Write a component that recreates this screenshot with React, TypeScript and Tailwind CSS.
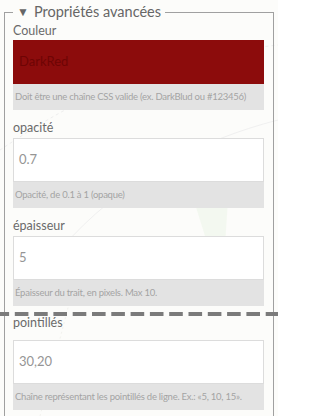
import React from 'react';

type Field = {
  label: string;
  value: string;
  help: string;
  swatch?: boolean;
  labelClass: string;
};

const fields: Field[] = [
  { label: 'Couleur', value: 'DarkRed', help: 'Doit être une chaîne CSS valide (ex. DarkBlud ou #123456)', swatch: true, labelClass: 'mt-0 mb-[2px]' },
  { label: 'opacité', value: '0.7', help: 'Opacité, de 0.1 à 1 (opaque)', labelClass: 'mt-[10px] mb-[3px]' },
  { label: 'épaisseur', value: '5', help: 'Épaisseur du trait, en pixels. Max 10.', labelClass: 'mt-[10px] mb-[3px]' },
  { label: 'pointillés', value: '30,20', help: 'Chaîne représentant les pointillés de ligne. Ex.: «5, 10, 15».', labelClass: 'mt-[9px] mb-[10px]' },
];

// faint map tiles showing through the panel
const MapBackdrop = () => (
  <svg className="absolute inset-0 pointer-events-none" width="278" height="416" viewBox="0 0 278 416">
    <path d="M178 150 L230 170 L222 290 Z" fill="#e9f3e4" opacity="0.45" />
    <path d="M0 150 C60 110 140 60 278 45" stroke="#eeeeee" strokeWidth="1" fill="none" strokeDasharray="3 3" />
    <path d="M60 250 C120 180 200 140 278 120" stroke="#f0f0f0" strokeWidth="1" fill="none" />
    <path d="M40 416 L70 300" stroke="#f2f2ee" strokeWidth="1" fill="none" strokeDasharray="2 3" />
  </svg>
);

export default function App() {
  return (
    <div className="relative w-[278px] h-[416px] overflow-hidden bg-[#fcfcfa]" style={{ fontFamily: 'Lato, "Noto Sans", sans-serif' }}>
      <MapBackdrop />
      <fieldset className="relative mt-[2px] ml-[4px] w-[270px] h-[440px] border border-[#a0a0a0] pl-[8px] pr-[9px] m-0">
        <legend className="px-[4px] text-[14.5px] leading-[20px] text-[#666666]">
          <span className="inline-block text-[12px] mr-[5px] translate-y-[-1px]">▼</span>Propriétés avancées
        </legend>
        {fields.map((f) => (
          <div key={f.label}>
            <div className={`text-[12.5px] leading-[15px] text-[#6a6a6a] ${f.labelClass}`}>{f.label}</div>
            {f.swatch ? (
              <div className="h-[44px] bg-[#8c0c0c] flex items-center pl-[6px] text-[13px] text-[#6e0404]">{f.value}</div>
            ) : (
              <div className="h-[44px] bg-white border border-[#dcdcdc] flex items-center pl-[5px] text-[13px] text-[#959595]">{f.value}</div>
            )}
            <div className="h-[26px] bg-[#e3e3e3] flex items-center pl-[2px] text-[9.5px] tracking-[-0.25px] text-[#a3a3a3] whitespace-nowrap overflow-hidden">{f.help}</div>
          </div>
        ))}
      </fieldset>
      <svg className="absolute left-0 top-[312px] pointer-events-none" width="278" height="4" viewBox="0 0 278 4">
        <line x1="-4.5" y1="2" x2="278" y2="2" stroke="#7b7b7b" strokeWidth="4" strokeDasharray="13.6 5.7" />
      </svg>
    </div>
  );
}
